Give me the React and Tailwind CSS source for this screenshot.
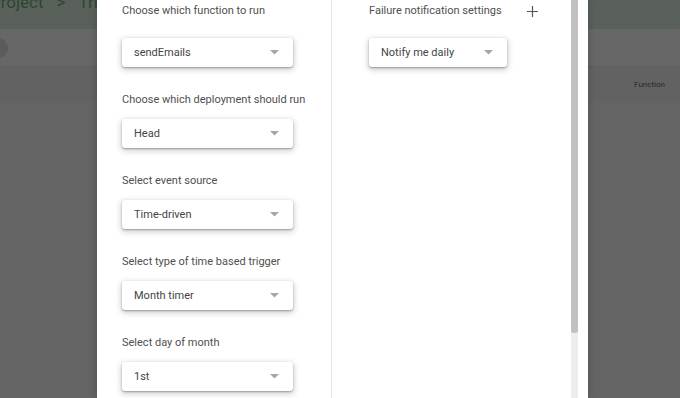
import React from "react";

const leftGroups = [
  { label: "Choose which function to run", value: "sendEmails", first: true },
  { label: "Choose which deployment should run", value: "Head" },
  { label: "Select event source", value: "Time-driven" },
  { label: "Select type of time based trigger", value: "Month timer" },
  { label: "Select day of month", value: "1st" },
];

function Caret() {
  return (
    <svg width="9" height="5" viewBox="0 0 9 5" className="shrink-0">
      <path d="M0 0 L9 0 L4.5 4.5 Z" fill="#a6a6a6" />
    </svg>
  );
}

function Dropdown({ value, width }) {
  return (
    <div
      className={`${width} h-[29px] flex items-center justify-between pl-[12px] pr-[14px] bg-white rounded-[3px] shadow-[0_1px_2px_rgba(0,0,0,0.3),0_2px_6px_1px_rgba(0,0,0,0.18)]`}
    >
      <span className="text-[11px] text-[#444444] leading-none">{value}</span>
      <Caret />
    </div>
  );
}

function Field({ label, value, first, width = "w-[171px]" }) {
  return (
    <div className="flex flex-col mb-[25px]">
      <span className="h-[16px] leading-[16px] text-[11px] text-[#4f4f4f] whitespace-nowrap">
        {label}
      </span>
      <div className={first ? "mt-[19px]" : "mt-[11px]"}>
        <Dropdown value={value} width={width} />
      </div>
    </div>
  );
}

export default function App() {
  return (
    <div
      className="relative w-[680px] h-[398px] overflow-hidden bg-[#646464]"
      style={{ fontFamily: "Roboto, 'Liberation Sans', sans-serif" }}
    >
      {/* page under the overlay */}
      <div className="flex flex-col">
        <div className="h-[29px] bg-[#5a615b]">
          <div className="w-[97px] h-[29px] overflow-hidden">
            <div className="ml-[-10px] mt-[-8px] text-[17px] leading-[20px] text-[#2c4632] whitespace-nowrap flex">
              <span>Project</span>
              <span className="mx-[13px]">&gt;</span>
              <span>Triggers</span>
            </div>
          </div>
        </div>
        <div className="h-[38px] bg-[#676767] border-b border-[#5e5e5e] flex items-center">
          <div className="ml-[-12px] w-[20px] h-[20px] rounded-full bg-[#5b5b5b]" />
        </div>
        <div className="h-[35px] bg-[#626262] flex items-center justify-end pr-[15px]">
          <span className="text-[8px] text-[#2a2a2a]">Function</span>
        </div>
      </div>

      {/* dialog */}
      <div className="absolute left-[97px] top-0 w-[491px] h-[398px] bg-white flex shadow-[0_0_8px_rgba(0,0,0,0.2)]">
        <div className="w-[235px] border-r border-[#e2e2e2] pl-[25px] pt-[3px] flex flex-col">
          {leftGroups.map((g) => (
            <Field key={g.label} {...g} />
          ))}
        </div>
        <div className="flex-1 pl-[37px] pt-[3px] flex flex-col">
          <div className="flex items-center h-[16px]">
            <span className="text-[11px] text-[#4f4f4f] whitespace-nowrap">
              Failure notification settings
            </span>
            <svg width="11" height="11" viewBox="0 0 11 11" className="ml-[25px]">
              <path d="M5.5 0 V11 M0 5.5 H11" stroke="#555" strokeWidth="1.2" />
            </svg>
          </div>
          <div className="mt-[19px]">
            <Dropdown value="Notify me daily" width="w-[138px]" />
          </div>
        </div>
        <div className="w-[7px] flex flex-col">
          <div className="h-[333px] bg-[#c1c1c1] rounded-b-[2px]" />
          <div className="flex-1 bg-[#ededed]" />
        </div>
        <div className="w-[10px]" />
      </div>
    </div>
  );
}
